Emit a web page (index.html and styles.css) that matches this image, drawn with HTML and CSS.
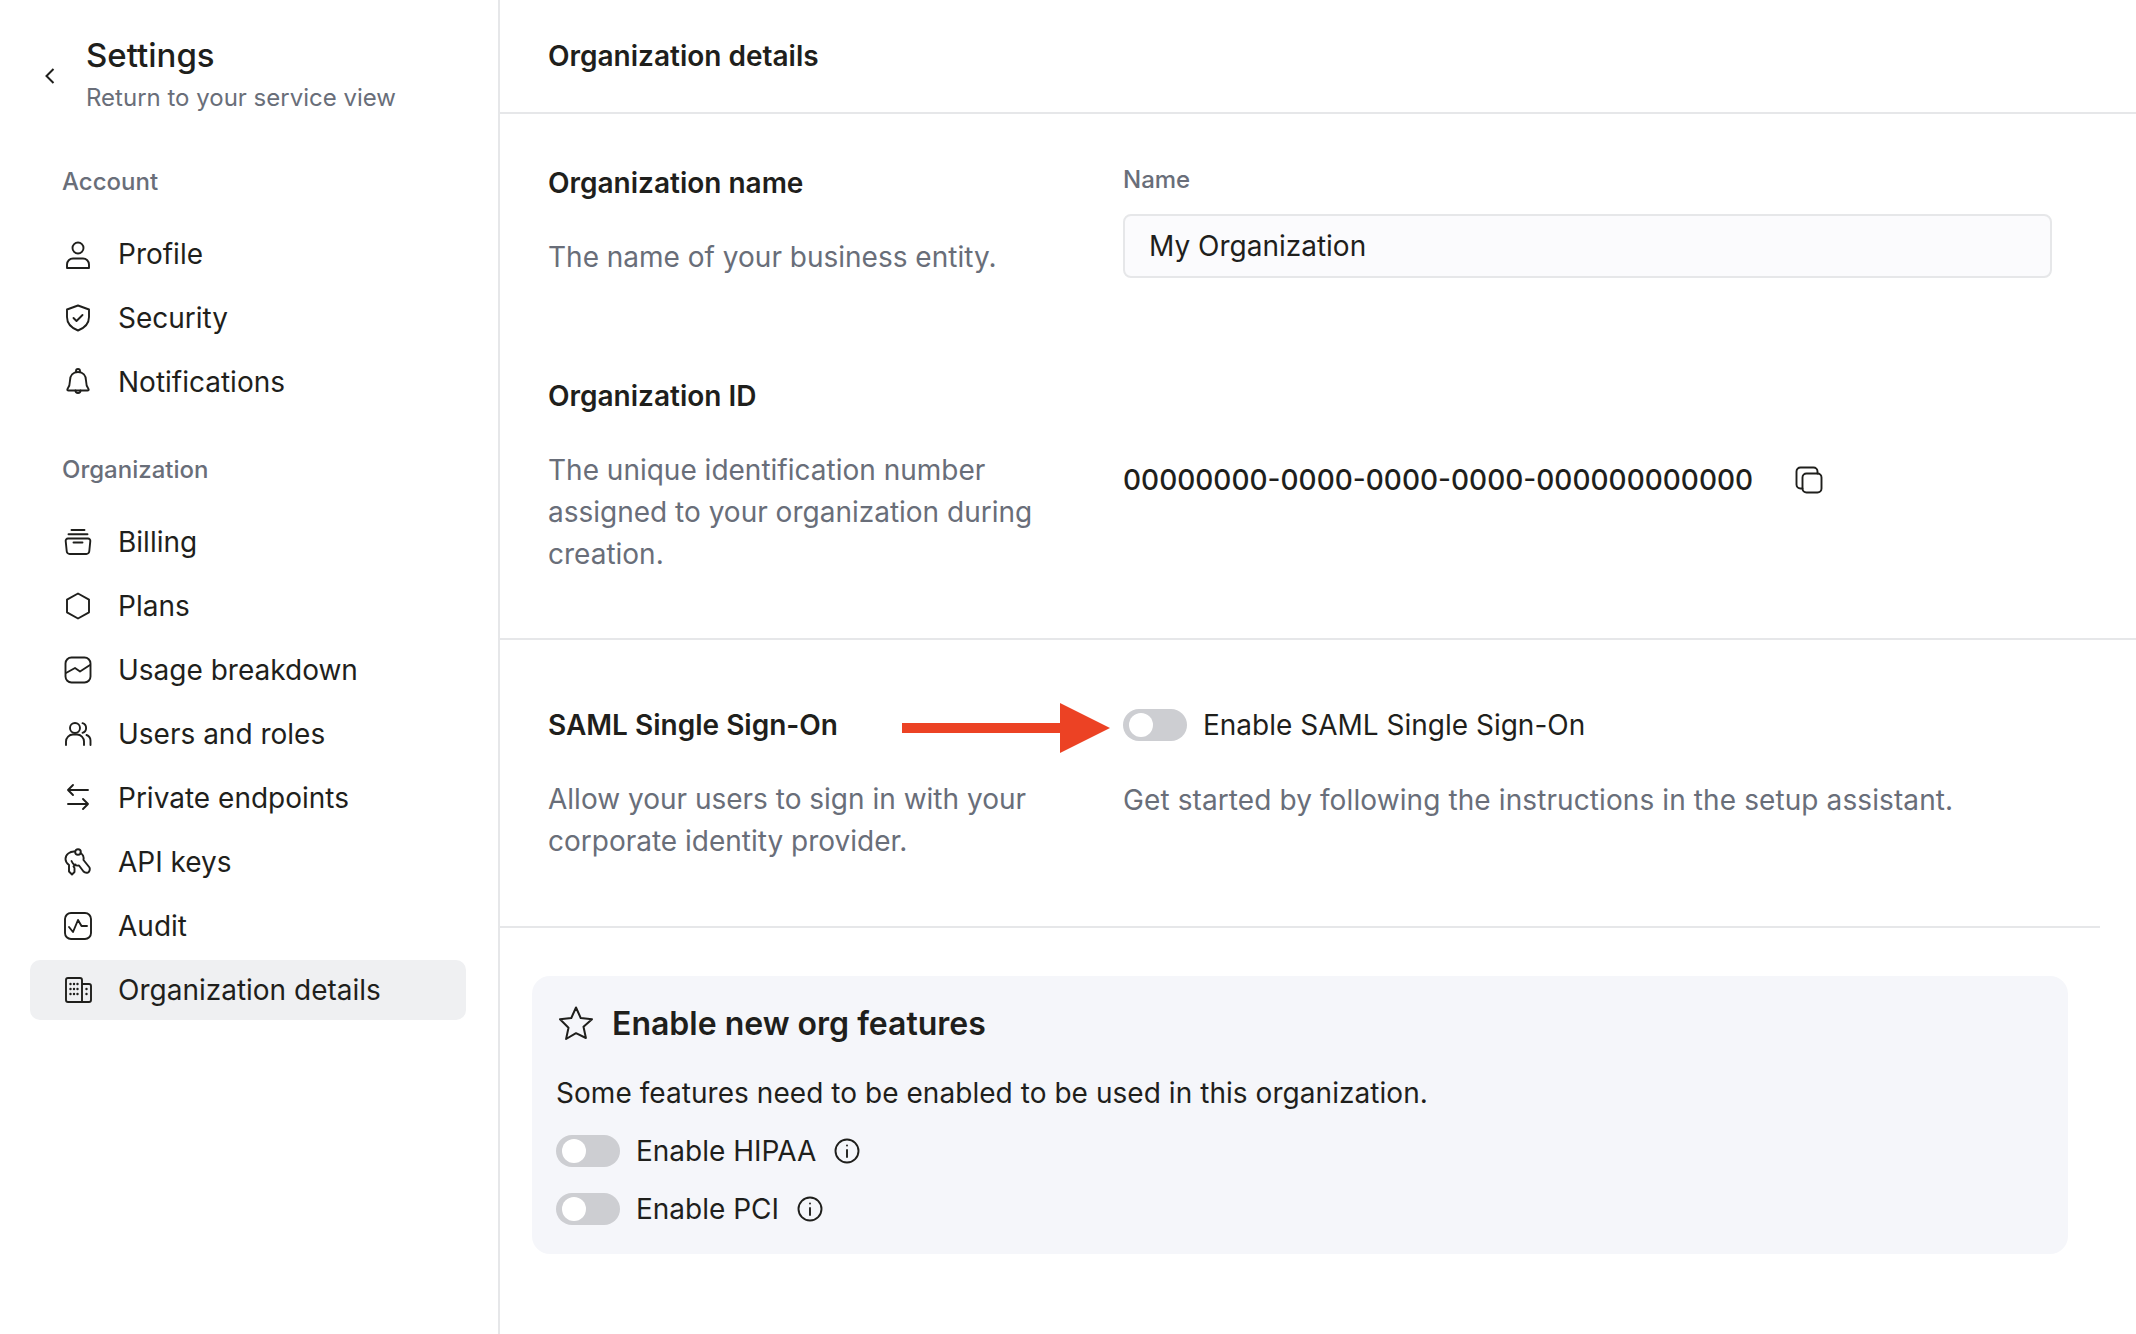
FILE: index.html
```html
<!DOCTYPE html>
<html lang="en">

<head>
    <meta charset="UTF-8">
    <title>Organization details</title>
    <link rel="stylesheet" href="styles.css">
</head>

<body>
    <aside class="sidebar">
        <div class="back">
            <svg class="back-icon" viewBox="0 0 12 18"><path d="M9.500 2 2.500 9l7 7" /></svg>
            <div>
                <div class="back-title">Settings</div>
                <div class="back-sub">Return to your service view</div>
            </div>
        </div>

        <div class="nav-title nav-title-first">Account</div>
        <nav class="nav">
            <a class="nav-item">
                <svg class="icon" viewBox="0 0 32 32"><circle cx="16" cy="10" r="5.500" /><path d="M5 30v-3.500a6 6 0 0 1 6-6h10a6 6 0 0 1 6 6V30z" /></svg>
                Profile
            </a>
            <a class="nav-item">
                <svg class="icon" viewBox="0 0 32 32"><path d="M16 3.500 27 7.500V15c0 6.500-4.500 11-11 13.500C9.500 26 5 21.500 5 15V7.500z" /><path d="m11.500 16 3 3 6-6" /></svg>
                Security
            </a>
            <a class="nav-item">
                <svg class="icon" viewBox="0 0 32 32"><path d="M16 6c-5 0-8 3.500-8 8.500 0 4.500-1 6.500-2.500 8.500-.5 1 0 1.500 1 1.500h19c1 0 1.500-.5 1-1.500-1.500-2-2.500-4-2.500-8.500C24 9.500 21 6 16 6z" /><path d="M14 6V5a2 2 0 0 1 4 0v1M13.500 24.500a2.500 2.500 0 0 0 5 0" /></svg>
                Notifications
            </a>
        </nav>

        <div class="nav-title">Organization</div>
        <nav class="nav">
            <a class="nav-item">
                <svg class="icon" viewBox="0 0 32 32"><path d="M9.500 4h13M6.500 8.200h19M6 12.500h20a2.300 2.300 0 0 1 2.300 2.700l-1 9.800a3 3 0 0 1-3 3H7.700a3 3 0 0 1-3-3l-1-9.800A2.300 2.300 0 0 1 6 12.500zM11.500 16.500h9" /></svg>
                Billing
            </a>
            <a class="nav-item">
                <svg class="icon" viewBox="0 0 32 32"><path d="M16 3.500 27 9.700v12.600l-11 6.200-11-6.200V9.700z" /></svg>
                Plans
            </a>
            <a class="nav-item">
                <svg class="icon" viewBox="0 0 32 32"><rect x="3.500" y="3.500" width="25" height="25" rx="6" /><path d="m4 19 9-5 5 3.500L28 11" /></svg>
                Usage breakdown
            </a>
            <a class="nav-item">
                <svg class="icon" viewBox="0 0 32 32"><circle cx="13" cy="10" r="5" /><path d="M4 27v-3.500a7 7 0 0 1 7-7h4a7 7 0 0 1 7 7V27M20.500 5.200a5 5 0 0 1 0 9.600M24.500 17a6 6 0 0 1 4 5.500V27" /></svg>
                Users and roles
            </a>
            <a class="nav-item">
                <svg class="icon" viewBox="0 0 32 32"><path d="M26 8H6M11 3 6 8l5 5M6 22h20M21 17l5 5-5 5" /></svg>
                Private endpoints
            </a>
            <a class="nav-item">
                <svg class="icon" viewBox="0 0 32 32"><path d="M13 5.500c-5-.5-9.500 3-9.500 7.500 0 2.500 1.500 4.500 3.500 6v6.500l3 3 2.500-2.500v-4l-1-1.500 2-2" /><circle cx="16" cy="6" r="2.800" /><path d="M18.500 7c2.500 1.500 3.500 4 3 7l6 7.500c.8 1.500 0 4.500-1.500 5-2 .5-3.500 0-4.500-1l-4.500-6c-3 .5-6-1-7.500-4.500" /></svg>
                API keys
            </a>
            <a class="nav-item">
                <svg class="icon" viewBox="0 0 32 32"><rect x="3" y="3" width="26" height="26" rx="6" /><path d="m7 17 4 5 5-12 3.500 6H25" /></svg>
                Audit
            </a>
            <a class="nav-item nav-item-active">
                <svg class="icon" viewBox="0 0 32 32"><path d="M20 28H6a2 2 0 0 1-2-2V6a2 2 0 0 1 2-2h12a2 2 0 0 1 2 2zM20 10h7a2 2 0 0 1 2 2v14a2 2 0 0 1-2 2h-7" /><path class="dots" d="M8.500 10h.01M12 10h.01M15.500 10h.01M8.500 15h.01M12 15h.01M15.500 15h.01M8.500 20h.01M12 20h.01M15.500 20h.01M24.500 15h.01M24.500 20h.01" /></svg>
                Organization details
            </a>
        </nav>
    </aside>

    <main class="main">
        <header class="page-header">Organization details</header>

        <section class="section section-top">
            <div class="row row-name">
                <div>
                    <h3>Organization name</h3>
                    <p class="desc">The name of your business entity.</p>
                </div>
                <div>
                    <label class="field-label" for="orgname">Name</label>
                    <input class="field" id="orgname" type="text" value="My Organization">
                </div>
            </div>
            <div class="row row-id">
                <div>
                    <h3>Organization ID</h3>
                    <p class="desc">The unique identification number assigned to your organization during creation.</p>
                </div>
                <div class="org-id">
                    <span>00000000-0000-0000-0000-000000000000</span>
                    <svg class="icon copy" viewBox="0 0 32 32"><rect x="9.500" y="9.500" width="19" height="19" rx="4" /><path d="M9.500 24.500h-2a4 4 0 0 1-4-4V7.500a4 4 0 0 1 4-4h13a4 4 0 0 1 4 4v2" /></svg>
                </div>
            </div>
        </section>

        <section class="section section-saml">
            <div class="row">
                <div>
                    <h3>SAML Single Sign-On</h3>
                    <p class="desc">Allow your users to sign in with your corporate identity provider.</p>
                </div>
                <div>
                    <div class="toggle-row">
                        <span class="toggle"></span>
                        <span>Enable SAML Single Sign-On</span>
                    </div>
                    <p class="desc desc-wide">Get started by following the instructions in the setup assistant.</p>
                </div>
            </div>
            <svg class="arrow" viewBox="0 0 208 50"><path d="M0 20h158V0l50 25-50 25V30H0z" /></svg>
        </section>

        <section class="card">
            <div class="card-title">
                <svg class="star" viewBox="0 0 36 36"><path d="m18 2.500 4.700 10.500 11.300 1.200-8.500 7.600 2.400 11.200L18 28.200 8.100 34l2.400-11.200L2 14.200 13.300 13z" /></svg>
                Enable new org features
            </div>
            <p class="card-text">Some features need to be enabled to be used in this organization.</p>
            <div class="toggle-row card-toggle">
                <span class="toggle"></span>
                <span>Enable HIPAA</span>
                <svg class="info" viewBox="0 0 26 26"><circle cx="13" cy="13" r="11.500" /><path d="M13 12v7" /><path d="M13 7.500h.01" /></svg>
            </div>
            <div class="toggle-row card-toggle">
                <span class="toggle"></span>
                <span>Enable PCI</span>
                <svg class="info" viewBox="0 0 26 26"><circle cx="13" cy="13" r="11.500" /><path d="M13 12v7" /><path d="M13 7.500h.01" /></svg>
            </div>
        </section>
    </main>
</body>

</html>
```

FILE: styles.css
```css
* {
    box-sizing: border-box;
}

body {
    margin: 0;
    display: flex;
    min-height: 100vh;
    font-family: Inter, sans-serif;
    font-size: 28px;
    color: #1f1f1c;
    background-color: #ffffff;
}

.sidebar {
    width: 500px;
    flex-shrink: 0;
    padding: 32px 32px 0 30px;
    border-right: 2px solid #e6e7e9;
}

.back {
    display: flex;
    align-items: center;
    padding-left: 14px;
    gap: 30px;
}

.back-icon {
    width: 12px;
    height: 18px;
    margin-top: 1px;
    fill: none;
    stroke: #1f1f1c;
    stroke-width: 2;
}

.back-title {
    font-size: 33px;
    font-weight: 500;
    line-height: 46px;
}

.back-sub {
    font-size: 24px;
    line-height: 40px;
    color: #696e79;
}

.nav-title {
    margin: 36px 0 0 32px;
    font-size: 24px;
    font-weight: 500;
    line-height: 40px;
    color: #696e79;
}

.nav-title-first {
    margin-top: 44px;
}

.nav {
    margin-top: 20px;
    display: flex;
    flex-direction: column;
}

.nav-item {
    display: flex;
    align-items: center;
    gap: 24px;
    height: 64px;
    padding-left: 32px;
    border-radius: 10px;
}

.nav-item-active {
    height: 60px;
    margin-top: 2px;
    background-color: #eff0f2;
}

.icon {
    width: 32px;
    height: 32px;
    flex-shrink: 0;
    fill: none;
    stroke: #1f1f1c;
    stroke-width: 1.900;
    stroke-linecap: round;
    stroke-linejoin: round;
}

.icon .dots {
    stroke-width: 2.400;
}

.main {
    flex: 1;
}

.page-header {
    height: 114px;
    padding: 36px 0 0 48px;
    font-weight: 600;
    line-height: 40px;
    border-bottom: 2px solid #e6e7e9;
}

.section {
    position: relative;
    padding-left: 48px;
    border-bottom: 2px solid #e6e7e9;
}

.section-top {
    height: 526px;
    padding-top: 49px;
}

.section-saml {
    height: 288px;
    margin-right: 36px;
    padding-top: 65px;
}

.row {
    display: grid;
    grid-template-columns: 575px 929px;
}

.row-name {
    height: 213px;
}

h3 {
    margin: 0;
    font-size: 28px;
    font-weight: 600;
    line-height: 40px;
}

.desc {
    margin: 33px 0 0;
    line-height: 42px;
    color: #696e79;
}

.desc-wide {
    margin-top: 34px;
    letter-spacing: 0.1px;
}

.row > div:first-child .desc {
    max-width: 500px;
}

.field-label {
    display: block;
    margin-top: 2px;
    font-size: 24px;
    font-weight: 500;
    line-height: 30px;
    color: #696e79;
}

.field {
    display: block;
    width: 100%;
    height: 64px;
    margin-top: 19px;
    padding: 0 24px;
    border: 2px solid #e6e7e9;
    border-radius: 8px;
    background-color: #fbfbfd;
    font: inherit;
    color: #1f1f1c;
}

.org-id {
    display: flex;
    align-items: center;
    gap: 40px;
    height: 40px;
    margin-top: 84px;
    font-weight: 500;
}

.toggle-row {
    display: flex;
    align-items: center;
    gap: 16px;
    height: 40px;
}

.toggle {
    position: relative;
    width: 64px;
    height: 32px;
    flex-shrink: 0;
    border-radius: 16px;
    background-color: #cdced2;
}

.toggle::after {
    content: "";
    position: absolute;
    top: 4px;
    left: 6px;
    width: 24px;
    height: 24px;
    border-radius: 50%;
    background-color: #ffffff;
}

.arrow {
    position: absolute;
    left: 402px;
    top: 63px;
    width: 208px;
    height: 50px;
    fill: #ec4224;
}

.card {
    width: 1536px;
    height: 278px;
    margin: 48px 0 0 32px;
    padding: 25px 24px 0;
    border-radius: 18px;
    background-color: #f5f6fa;
}

.card-title {
    display: flex;
    align-items: center;
    gap: 18px;
    height: 44px;
    font-size: 32px;
    font-weight: 600;
}

.star {
    width: 36px;
    height: 36px;
    margin-left: 2px;
    fill: none;
    stroke: #1f1f1c;
    stroke-width: 2;
    stroke-linejoin: round;
}

.card-text {
    margin: 27px 0 0;
    line-height: 42px;
    letter-spacing: 0.05px;
}

.card-toggle {
    height: 32px;
}

.card-text + .card-toggle {
    margin-top: 21px;
}

.card-toggle + .card-toggle {
    margin-top: 26px;
}

.info {
    width: 26px;
    height: 26px;
    margin-left: 2px;
    fill: none;
    stroke: #1f1f1c;
    stroke-width: 1.900;
    stroke-linecap: round;
}
```
